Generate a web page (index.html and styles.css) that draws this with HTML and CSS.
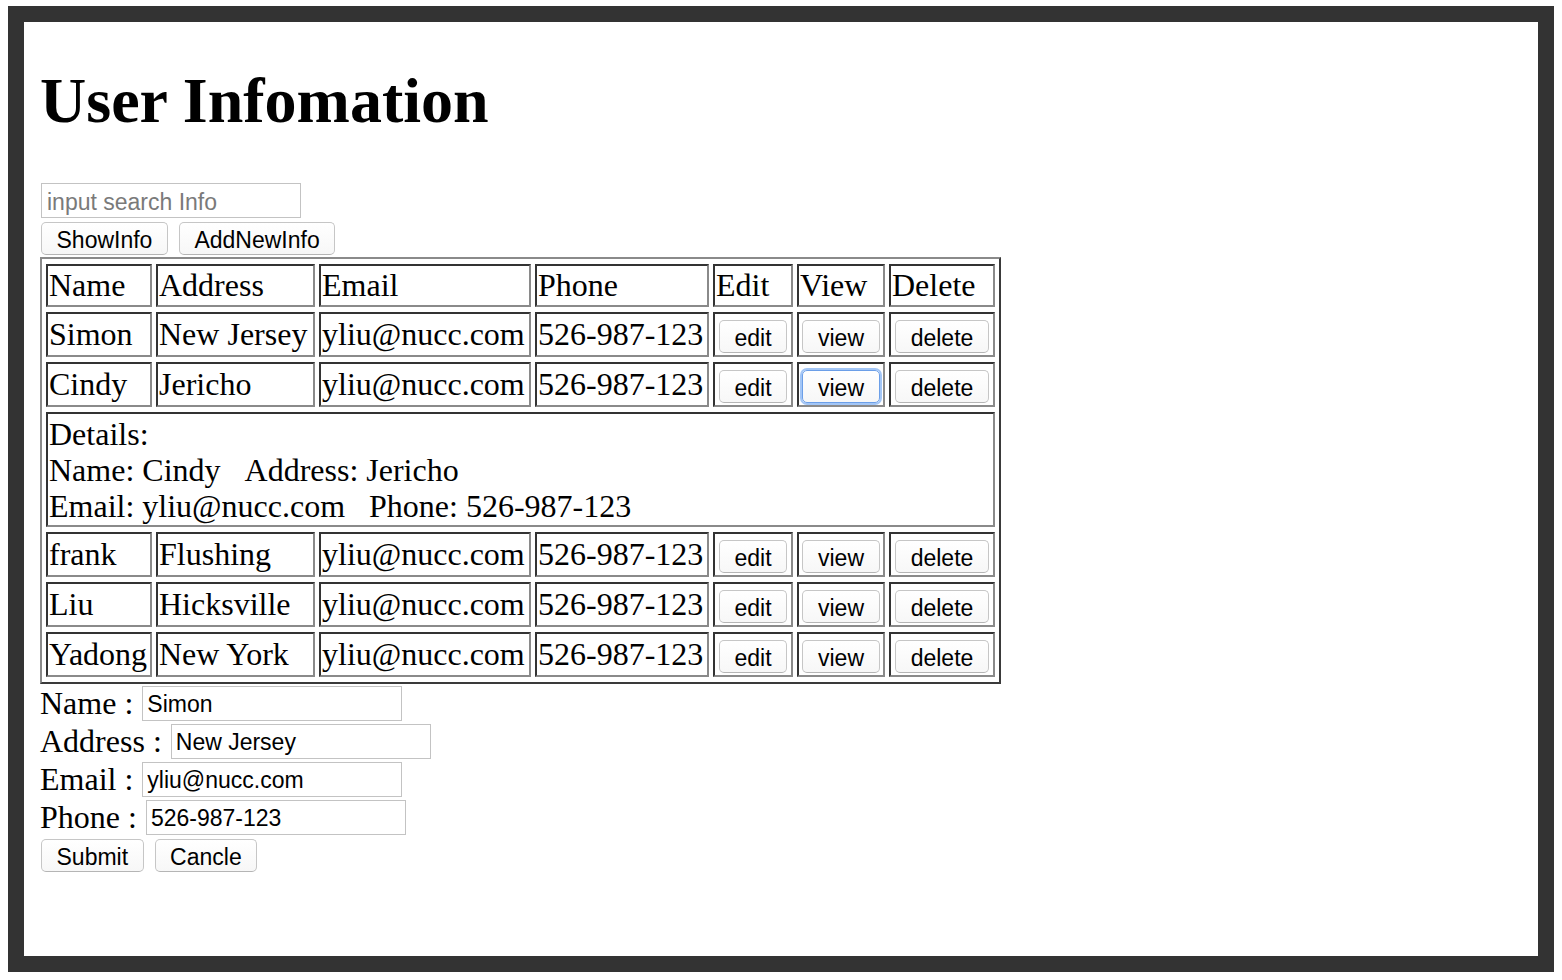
FILE: index.html
```html
<!DOCTYPE html>
<html lang="en">
<head>
<meta charset="utf-8">
<title>User Infomation</title>
<link rel="stylesheet" href="styles.css">
</head>
<body>
<div class="frame">
  <h1 class="title">User Infomation</h1>
  <input class="text-input search" type="text" placeholder="input search Info">
  <div class="actions">
    <button class="btn" type="button">ShowInfo</button>
    <button class="btn" type="button">AddNewInfo</button>
  </div>
  <table class="users">
    <thead>
      <tr class="head-row">
        <th class="c-name">Name</th>
        <th class="c-addr">Address</th>
        <th class="c-email">Email</th>
        <th class="c-phone">Phone</th>
        <th class="c-edit">Edit</th>
        <th class="c-view">View</th>
        <th class="c-del">Delete</th>
      </tr>
    </thead>
    <tbody>
      <tr class="data-row">
        <td>Simon</td><td>New Jersey</td><td>yliu@nucc.com</td><td>526-987-123</td>
        <td class="btn-cell"><button class="btn" type="button">edit</button></td>
        <td class="btn-cell"><button class="btn" type="button">view</button></td>
        <td class="btn-cell"><button class="btn" type="button">delete</button></td>
      </tr>
      <tr class="data-row">
        <td>Cindy</td><td>Jericho</td><td>yliu@nucc.com</td><td>526-987-123</td>
        <td class="btn-cell"><button class="btn" type="button">edit</button></td>
        <td class="btn-cell"><button class="btn focused" type="button">view</button></td>
        <td class="btn-cell"><button class="btn" type="button">delete</button></td>
      </tr>
      <tr class="details-row">
        <td colspan="7">
          <div>Details:</div>
          <div>Name: Cindy&nbsp;&nbsp;&nbsp;Address: Jericho</div>
          <div>Email: yliu@nucc.com&nbsp;&nbsp;&nbsp;Phone: 526-987-123</div>
        </td>
      </tr>
      <tr class="data-row">
        <td>frank</td><td>Flushing</td><td>yliu@nucc.com</td><td>526-987-123</td>
        <td class="btn-cell"><button class="btn" type="button">edit</button></td>
        <td class="btn-cell"><button class="btn" type="button">view</button></td>
        <td class="btn-cell"><button class="btn" type="button">delete</button></td>
      </tr>
      <tr class="data-row">
        <td>Liu</td><td>Hicksville</td><td>yliu@nucc.com</td><td>526-987-123</td>
        <td class="btn-cell"><button class="btn" type="button">edit</button></td>
        <td class="btn-cell"><button class="btn" type="button">view</button></td>
        <td class="btn-cell"><button class="btn" type="button">delete</button></td>
      </tr>
      <tr class="data-row">
        <td>Yadong</td><td>New York</td><td>yliu@nucc.com</td><td>526-987-123</td>
        <td class="btn-cell"><button class="btn" type="button">edit</button></td>
        <td class="btn-cell"><button class="btn" type="button">view</button></td>
        <td class="btn-cell"><button class="btn" type="button">delete</button></td>
      </tr>
    </tbody>
  </table>
  <form class="edit-form">
    <div class="field"><label class="field-label">Name :</label><input class="text-input" type="text" value="Simon"></div>
    <div class="field"><label class="field-label">Address :</label><input class="text-input" type="text" value="New Jersey"></div>
    <div class="field"><label class="field-label">Email :</label><input class="text-input" type="text" value="yliu@nucc.com"></div>
    <div class="field"><label class="field-label">Phone :</label><input class="text-input" type="text" value="526-987-123"></div>
    <div class="actions form-actions">
      <button class="btn" type="button">Submit</button>
      <button class="btn" type="button">Cancle</button>
    </div>
  </form>
</div>
</body>
</html>
```

FILE: styles.css
```css
html, body {
  background: #ffffff;
}

body {
  margin: 6px 8px 0;
  font-family: "Liberation Serif", "Times New Roman", serif;
  font-size: 32px;
  color: #000;
}

.frame {
  border: 16px solid #333333;
  height: 934px;
  padding: 0 16px;
  background: #fff;
}

.title {
  margin: 42px 0 45px;
  font-size: 64px;
  line-height: 74px;
  font-weight: bold;
}

.text-input {
  box-sizing: border-box;
  display: block;
  width: 260px;
  height: 35px;
  margin: 0 0 0 1px;
  padding: 3px 4px 0;
  border: 1px solid #c3c3c3;
  border-radius: 0;
  font-family: "Liberation Sans", Arial, sans-serif;
  font-size: 23px;
  color: #000;
  background: #fff;
  outline: none;
}

.search {
  padding-left: 5px;
}

.search::placeholder {
  color: #7a7a7a;
}

.actions {
  display: flex;
  gap: 11px;
  margin-top: 4px;
  padding-left: 1px;
}

.btn {
  box-sizing: border-box;
  height: 33px;
  margin: 0;
  padding: 3px 14.5px 0;
  border: 1px solid #c6c6c6;
  border-bottom-color: #b5b5b5;
  border-radius: 5px;
  background: linear-gradient(#ffffff, #f7f7f7);
  font-family: "Liberation Sans", Arial, sans-serif;
  font-size: 23px;
  color: #000;
  line-height: 1;
}

.btn.focused {
  border-color: #6c9fe8;
  box-shadow: 0 0 0 2px #a3c6f6;
}

.users {
  margin-top: 2px;
  border-style: solid;
  border-width: 2px;
  border-color: #8a8a8a #3a3a3a #3a3a3a #8a8a8a;
  border-spacing: 4px 5px;
}

.users th,
.users td {
  padding: 1px;
  border-style: solid;
  border-width: 2px;
  border-color: #333333 #8a8a8a #8a8a8a #333333;
  font-weight: normal;
  text-align: left;
  line-height: 37px;
  white-space: nowrap;
}

.head-row {
  height: 43px;
}

.data-row {
  height: 45px;
}

.details-row {
  height: 115px;
}

.details-row td {
  line-height: 36px;
}

.c-name { width: 100px; }
.c-addr { width: 153px; }
.c-email { width: 206px; }
.c-phone { width: 168px; }
.c-edit { width: 74px; }
.c-view { width: 82px; }
.c-del { width: 100px; }

.users td.btn-cell {
  text-align: center;
  line-height: 1;
}

.btn-cell .btn {
  vertical-align: middle;
  margin-top: 3px;
}

.edit-form {
  margin: 0;
}

.field {
  display: flex;
  align-items: center;
  height: 38px;
}

.field-label {
  line-height: 37px;
  margin-right: 9px;
}

.field .text-input {
  margin-left: 0;
}

.form-actions {
  margin-top: 3px;
}
```
